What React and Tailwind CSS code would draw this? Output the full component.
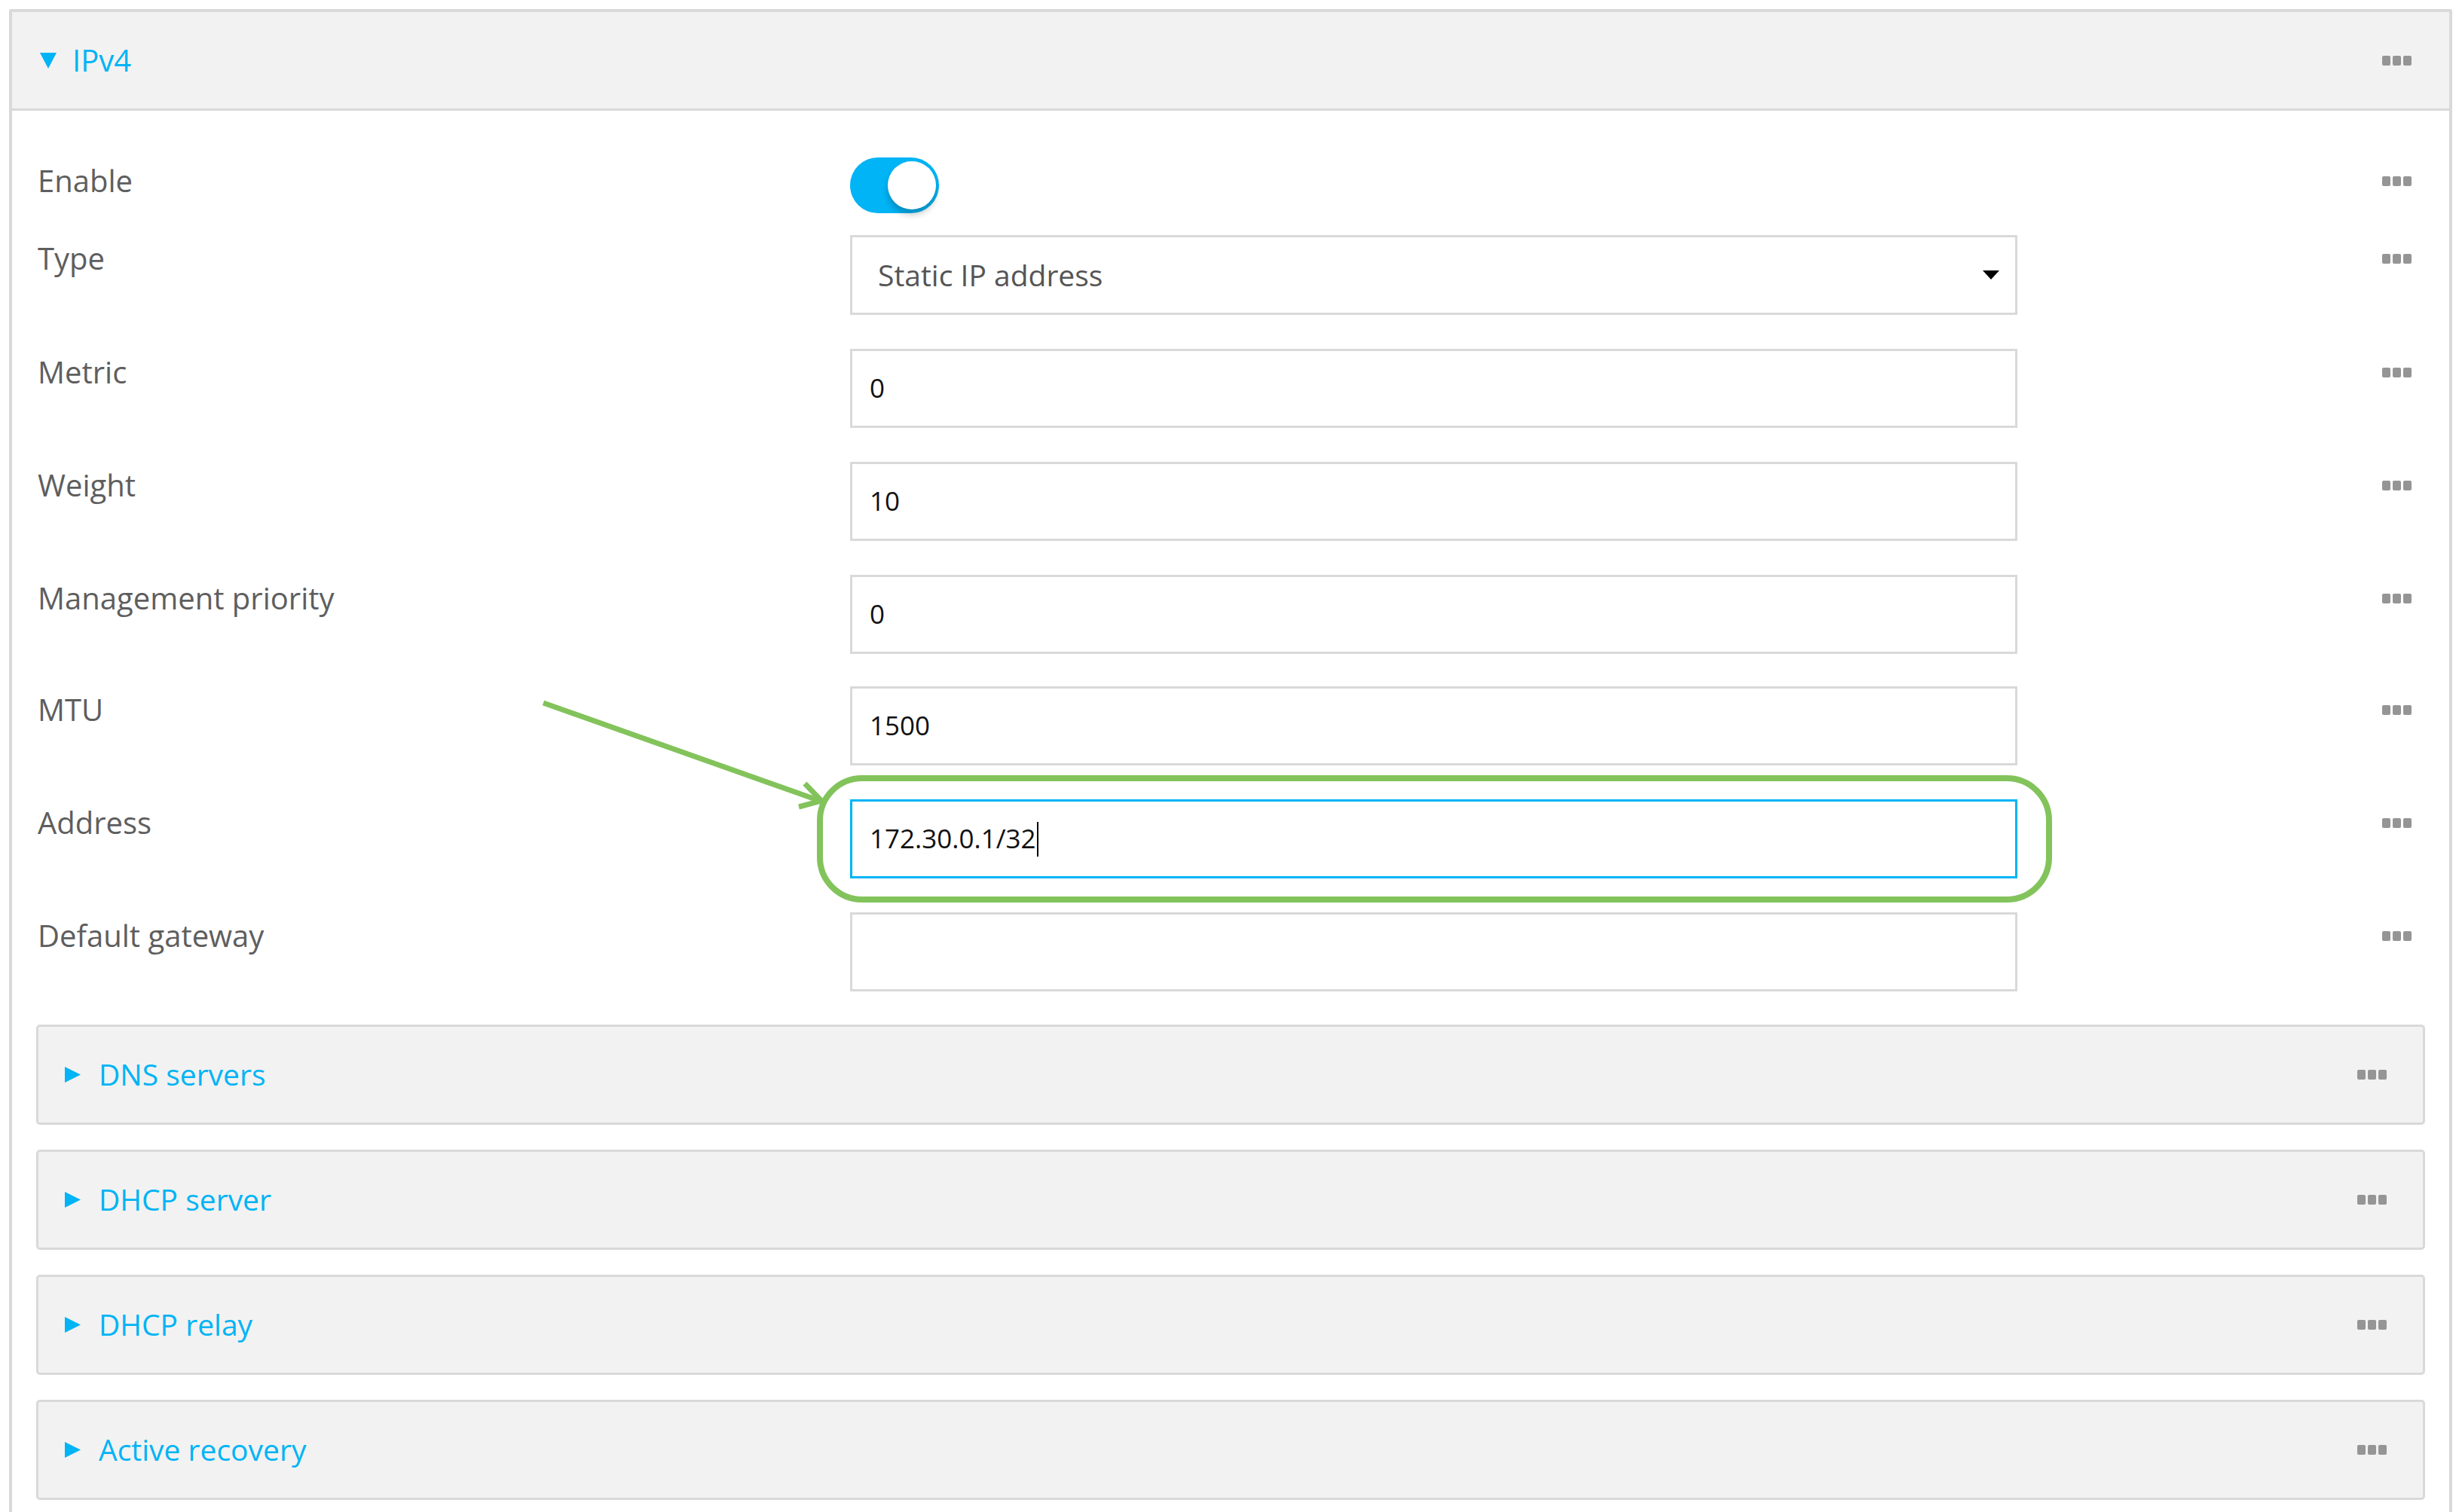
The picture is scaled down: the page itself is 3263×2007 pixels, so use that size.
import React from "react";

const fields = [
	{ label: "Type", kind: "select", value: "Static IP address" },
	{ label: "Metric", value: "0" },
	{ label: "Weight", value: "10" },
	{ label: "Management priority", value: "0" },
	{ label: "MTU", value: "1500", gap: "mt-[43px]" },
	{ label: "Address", value: "172.30.0.1/32", focused: true },
	{ label: "Default gateway", value: "" },
];

const sections = ["DNS servers", "DHCP server", "DHCP relay", "Active recovery"];

function Dots() {
	return (
		<div className="flex gap-[3px]">
			<span className="w-[11px] h-[13px] rounded-[2px] bg-[#959595]" />
			<span className="w-[11px] h-[13px] rounded-[2px] bg-[#959595]" />
			<span className="w-[11px] h-[13px] rounded-[2px] bg-[#959595]" />
		</div>
	);
}

function Row({ label, children, className = "" }) {
	return (
		<div className={`flex items-start ${className}`}>
			<div className="w-[1078px] shrink-0 text-[40px] leading-[62px] text-[#5e5e5e]">{label}</div>
			<div className="w-[1549px] shrink-0">{children}</div>
			<div className="flex-1 flex justify-end items-center h-[62px]">
				<Dots />
			</div>
		</div>
	);
}

function Toggle() {
	return (
		<div className="relative w-[118px] h-[74px] rounded-full bg-[#00b4f5]">
			<div className="absolute right-[4px] top-[5px] w-[64px] h-[64px] rounded-full bg-white shadow-[0_7px_9px_rgba(0,0,0,0.22)]" />
		</div>
	);
}

function Field({ field }) {
	if (field.kind === "select") {
		return (
			<div className="h-[106px] border-[3px] border-[#d9d9d9] bg-white flex items-center pl-[34px] pr-[21px]">
				<span className="text-[39px] text-[#555555]">{field.value}</span>
				<svg className="ml-auto" width="22" height="12" viewBox="0 0 22 12">
					<polygon points="0,0 22,0 11,12" fill="#000" />
				</svg>
			</div>
		);
	}
	return (
		<div
			className={`h-[105px] border-[3px] bg-white flex items-center pl-[23px] ${
				field.focused ? "border-[#00b4f5]" : "border-[#d9d9d9]"
			}`}
		>
			<span className="text-[35px] text-[#111111]">{field.value}</span>
			{field.focused && <span className="w-[2px] h-[46px] bg-black ml-[1px]" />}
		</div>
	);
}

export default function App() {
	return (
		<div className="relative w-[3263px] min-h-[2007px] bg-white font-['Open_Sans',sans-serif] overflow-hidden">
			<div className="ml-[12px] mt-[12px] w-[3242px] border-[4px] border-[#d9d9d9] rounded-[3px]">
				<div className="h-[131px] bg-[#f2f2f2] border-b-[3px] border-[#d9d9d9] flex items-center pl-[37px] pr-[50px]">
					<svg width="22" height="21" viewBox="0 0 22 21">
						<polygon points="0,0 22,0 11,21" fill="#00b4f5" />
					</svg>
					<span className="ml-[21px] text-[40px] text-[#00b4f5]">IPv4</span>
					<div className="ml-auto">
						<Dots />
					</div>
				</div>

				<div className="pl-[34px] pr-[50px] pt-[62px]">
					<Row label="Enable">
						<Toggle />
					</Row>
					{fields.map((f, i) => (
						<Row key={f.label} label={f.label} className={i === 0 ? "mt-[29px]" : f.gap || "mt-[45px]"}>
							<Field field={f} />
						</Row>
					))}
				</div>

				<div className="px-[32px] pt-[44px] pb-[40px] flex flex-col gap-[33px]">
					{sections.map((s) => (
						<div
							key={s}
							className="h-[133px] bg-[#f2f2f2] border-[3px] border-[#d9d9d9] rounded-[5px] flex items-center pl-[35px] pr-[48px]"
						>
							<svg width="21" height="21" viewBox="0 0 21 21">
								<polygon points="0,0 21,10.5 0,21" fill="#00b4f5" />
							</svg>
							<span className="ml-[24px] text-[39px] text-[#00b4f5]">{s}</span>
							<div className="ml-auto">
								<Dots />
							</div>
						</div>
					))}
				</div>
			</div>

			{/* annotation: highlight box + arrow */}
			<div className="absolute left-[1084px] top-[1029px] w-[1639px] h-[169px] border-[8px] border-[#83c35b] rounded-[60px] pointer-events-none" />
			<svg
				className="absolute left-[700px] top-[900px] pointer-events-none"
				width="420"
				height="200"
				viewBox="0 0 420 200"
			>
				<line x1="21" y1="33" x2="388" y2="163" stroke="#83c35b" strokeWidth="7" />
				<polyline points="368,140 390,163 360,171" fill="none" stroke="#83c35b" strokeWidth="7" strokeLinejoin="miter" />
			</svg>
		</div>
	);
}
